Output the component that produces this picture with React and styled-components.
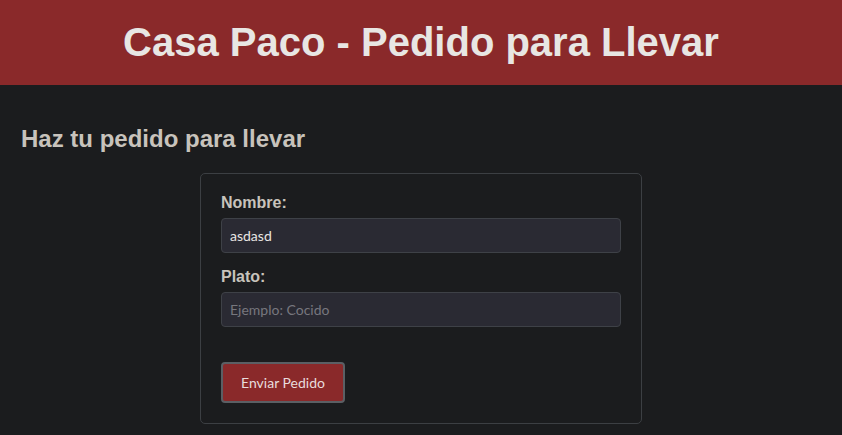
import styled, { createGlobalStyle } from 'styled-components';

const GlobalStyle = createGlobalStyle`
  html, body {
    margin: 0;
    padding: 0;
    background: #1b1c1e;
    font-family: 'Liberation Sans', Arial, sans-serif;
    color: #c8c3bc;
  }
`;

const Header = styled.header`
  background: #8a292a;
  height: 85px;
  display: flex;
  align-items: center;
  justify-content: center;
`;

const Title = styled.h1`
  margin: 0;
  font-size: 40px;
  font-weight: bold;
  color: #e8e6e3;
`;

const Main = styled.main`
  padding: 20px;
`;

const Heading = styled.h2`
  margin: 19.92px 0;
  padding-left: 1px;
  font-size: 24px;
  font-weight: bold;
  color: #c8c3bc;
`;

const Card = styled.form`
  max-width: 400px;
  margin: 0 auto;
  padding: 20px;
  border: 1px solid #3c3f43;
  border-radius: 5px;
`;

const Group = styled.div`
  margin-bottom: 15px;
`;

const Label = styled.label`
  display: block;
  font-size: 16px;
  font-weight: bold;
  color: #c8c3bc;
  margin-bottom: 6px;
`;

const Input = styled.input`
  display: block;
  box-sizing: border-box;
  width: 100%;
  height: 35px;
  padding: 0 8px;
  background: #2a2a33;
  border: 1px solid #3e4147;
  border-radius: 4px;
  color: #e8e6e3;
  font-family: Lato, 'Noto Sans', sans-serif;
  font-size: 14px;
  outline: none;

  &::placeholder {
    color: #77777e;
  }
`;

const SubmitButton = styled.button`
  margin-top: 20px;
  width: 124px;
  height: 41px;
  background: #8a292a;
  border: 2px solid #5b5f64;
  border-radius: 4px;
  color: #e8dcdc;
  font-family: Lato, 'Noto Sans', sans-serif;
  font-size: 14px;
  cursor: pointer;
`;

export default function App() {
  return (
    <>
      <GlobalStyle />
      <Header>
        <Title>Casa Paco - Pedido para Llevar</Title>
      </Header>
      <Main>
        <Heading>Haz tu pedido para llevar</Heading>
        <Card onSubmit={(e) => e.preventDefault()}>
          <Group>
            <Label htmlFor='nombre'>Nombre:</Label>
            <Input id='nombre' type='text' defaultValue='asdasd' />
          </Group>
          <Group>
            <Label htmlFor='plato'>Plato:</Label>
            <Input id='plato' type='text' placeholder='Ejemplo: Cocido' />
          </Group>
          <SubmitButton type='submit'>Enviar Pedido</SubmitButton>
        </Card>
      </Main>
    </>
  );
}
